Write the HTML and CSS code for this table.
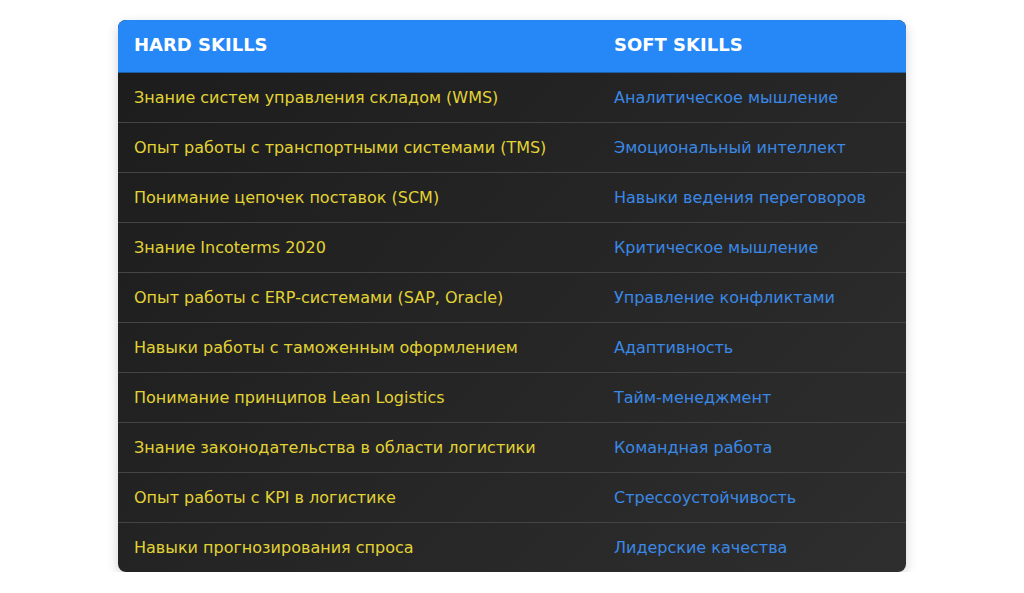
FILE: index.html
```html
<!DOCTYPE html>
<html lang="ru">
<head>
<meta charset="utf-8">
<title>Skills</title>
<link rel="stylesheet" href="styles.css">
</head>
<body>
<div class="page">
  <table class="skills">
    <thead>
      <tr><th class="col-hard">HARD SKILLS</th><th class="col-soft">SOFT SKILLS</th></tr>
    </thead>
    <tbody>
      <tr><td class="hard">Знание систем управления складом (WMS)</td><td class="soft">Аналитическое мышление</td></tr>
      <tr><td class="hard">Опыт работы с транспортными системами (TMS)</td><td class="soft">Эмоциональный интеллект</td></tr>
      <tr><td class="hard">Понимание цепочек поставок (SCM)</td><td class="soft">Навыки ведения переговоров</td></tr>
      <tr><td class="hard">Знание Incoterms 2020</td><td class="soft">Критическое мышление</td></tr>
      <tr><td class="hard">Опыт работы с ERP-системами (SAP, Oracle)</td><td class="soft">Управление конфликтами</td></tr>
      <tr><td class="hard">Навыки работы с таможенным оформлением</td><td class="soft">Адаптивность</td></tr>
      <tr><td class="hard">Понимание принципов Lean Logistics</td><td class="soft">Тайм-менеджмент</td></tr>
      <tr><td class="hard">Знание законодательства в области логистики</td><td class="soft">Командная работа</td></tr>
      <tr><td class="hard">Опыт работы с KPI в логистике</td><td class="soft">Стрессоустойчивость</td></tr>
      <tr><td class="hard">Навыки прогнозирования спроса</td><td class="soft">Лидерские качества</td></tr>
    </tbody>
  </table>
</div>
</body>
</html>
```

FILE: styles.css
```css
html, body {
  margin: 0;
  padding: 0;
  background: #ffffff;
}
body {
  font-family: "DejaVu Sans", sans-serif;
}
.page {
  display: flex;
  justify-content: center;
  padding-top: 20px;
}
.skills {
  width: 788px;
  border-collapse: separate;
  border-spacing: 0;
  table-layout: fixed;
  border-radius: 8px;
  overflow: hidden;
  background: linear-gradient(135deg, #1c1c1c 0%, #2e2e2e 100%);
  box-shadow: 0 4px 12px rgba(0, 0, 0, 0.18);
}
.col-hard { width: 480px; }
.skills th {
  background: #2687f6;
  color: #ffffff;
  font-weight: bold;
  font-size: 18px;
  text-align: left;
  height: 53px;
  padding: 0 16px 3px;
  box-sizing: border-box;
  border-bottom: 1px solid #1f5fa8;
}
.skills td {
  height: 50px;
  padding: 0 16px;
  box-sizing: border-box;
  font-size: 16px;
  border-bottom: 1px solid #444444;
}
.skills tbody tr:last-child td {
  border-bottom: none;
  height: 49px;
}
.hard { color: #e2d335; }
.soft { color: #3a88e6; }
```
